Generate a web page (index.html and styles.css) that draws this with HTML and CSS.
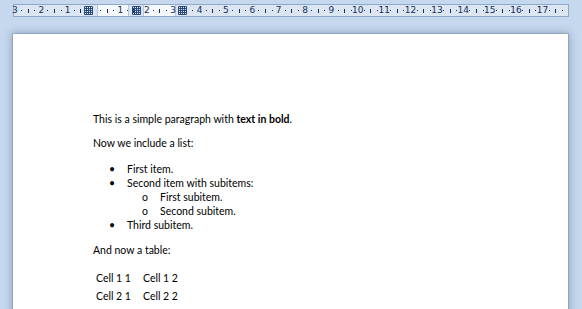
FILE: index.html
```html
<!DOCTYPE html>
<html>
<head>
<meta charset="utf-8">
<link rel="stylesheet" href="styles.css">
</head>
<body>
<div class="top">
  <div class="ruler">
    <div class="seg seg-margin"></div>
    <div class="seg seg-cell seg-c1"></div>
    <div class="seg seg-gap"></div>
    <div class="seg seg-cell seg-c2"></div>
    <div class="seg seg-rest"></div>
    <div class="scale"><i class="n">3</i><i class="d"></i><i class="b"></i><i class="d"></i><i class="n">2</i><i class="d"></i><i class="b"></i><i class="d"></i><i class="n">1</i><i class="d"></i><i class="b"></i><i class="d"></i><i class="n"></i><i class="d"></i><i class="b"></i><i class="d"></i><i class="n">1</i><i class="d"></i><i class="b"></i><i class="d"></i><i class="n">2</i><i class="d"></i><i class="b"></i><i class="d"></i><i class="n">3</i><i class="d"></i><i class="b"></i><i class="d"></i><i class="n">4</i><i class="d"></i><i class="b"></i><i class="d"></i><i class="n">5</i><i class="d"></i><i class="b"></i><i class="d"></i><i class="n">6</i><i class="d"></i><i class="b"></i><i class="d"></i><i class="n">7</i><i class="d"></i><i class="b"></i><i class="d"></i><i class="n">8</i><i class="d"></i><i class="b"></i><i class="d"></i><i class="n">9</i><i class="d"></i><i class="b"></i><i class="d"></i><i class="n">10</i><i class="d"></i><i class="b"></i><i class="d"></i><i class="n">11</i><i class="d"></i><i class="b"></i><i class="d"></i><i class="n">12</i><i class="d"></i><i class="b"></i><i class="d"></i><i class="n">13</i><i class="d"></i><i class="b"></i><i class="d"></i><i class="n">14</i><i class="d"></i><i class="b"></i><i class="d"></i><i class="n">15</i><i class="d"></i><i class="b"></i><i class="d"></i><i class="n">16</i><i class="d"></i><i class="b"></i><i class="d"></i><i class="n">17</i><i class="d"></i><i class="b"></i><i class="d"></i></div>
    <svg class="marker m1" width="9" height="9" viewBox="0 0 9 9"><path d="M0.5 0.5H8.5V8.5H0.5Z M2.5 0.5V8.5 M4.5 0.5V8.5 M6.5 0.5V8.5 M0.5 2.5H8.5 M0.5 4.5H8.5 M0.5 6.5H8.5" fill="none" stroke="#2a4a7a" stroke-width="1"/></svg>
    <svg class="marker m2" width="9" height="9" viewBox="0 0 9 9"><path d="M0.5 0.5H8.5V8.5H0.5Z M2.5 0.5V8.5 M4.5 0.5V8.5 M6.5 0.5V8.5 M0.5 2.5H8.5 M0.5 4.5H8.5 M0.5 6.5H8.5" fill="none" stroke="#2a4a7a" stroke-width="1"/></svg>
    <svg class="marker m3" width="9" height="9" viewBox="0 0 9 9"><path d="M0.5 0.5H8.5V8.5H0.5Z M2.5 0.5V8.5 M4.5 0.5V8.5 M6.5 0.5V8.5 M0.5 2.5H8.5 M0.5 4.5H8.5 M0.5 6.5H8.5" fill="none" stroke="#2a4a7a" stroke-width="1"/></svg>
  </div>
</div>
<div class="page">
  <p>This is a simple paragraph with <b>text in bold</b>.</p>
  <p>Now we include a list:</p>
  <ul class="list">
    <li>First item.</li>
    <li>Second item with subitems:
      <ul class="sublist">
        <li>First subitem.</li>
        <li>Second subitem.</li>
      </ul>
    </li>
    <li>Third subitem.</li>
  </ul>
  <p>And now a table:</p>
  <table class="tbl">
    <tr><td class="c1">Cell 1 1</td><td>Cell 1 2</td></tr>
    <tr><td class="c1">Cell 2 1</td><td>Cell 2 2</td></tr>
  </table>
</div>
</body>
</html>
```

FILE: styles.css
```css
html, body {
  margin: 0;
  padding: 0;
}
body {
  background: #c5d8ee;
  width: 582px;
  height: 309px;
  overflow: hidden;
  font-family: Lato, "Open Sans", sans-serif;
}
.top {
  height: 34px;
  padding: 4px 0 0 13px;
  box-sizing: border-box;
}
.ruler {
  position: relative;
  width: 556px;
  height: 13px;
  box-sizing: border-box;
  border: 1px solid #8ea8ca;
  background: #dce6f3;
  display: flex;
}
.seg { height: 100%; }
.seg-margin { width: 83px; }
.seg-cell {
  background: #f6f9fc;
  border-left: 1px solid #b7c8de;
  border-right: 1px solid #b7c8de;
  box-sizing: border-box;
}
.seg-c1 { width: 32px; }
.seg-gap { width: 14px; }
.seg-c2 { width: 33px; }
.seg-rest { flex: 1; }
.scale {
  position: absolute;
  left: -2.4px;
  top: 0;
  height: 11px;
  display: flex;
  align-items: center;
  font-family: "DejaVu Sans", sans-serif;
  font-size: 9px;
  color: #14305a;
}
.scale i {
  flex: 0 0 6.594px;
  min-width: 0;
  width: 6.594px;
  display: flex;
  justify-content: center;
  align-items: center;
  font-style: normal;
  height: 11px;
  line-height: 11px;
  white-space: nowrap;
}
.scale i.d::before {
  content: "";
  flex: none;
  width: 1px;
  height: 1px;
  background: #14305a;
}
.scale i.b::before {
  content: "";
  flex: none;
  width: 1px;
  height: 4px;
  background: #14305a;
}
.marker {
  position: absolute;
  top: 1px;
  display: block;
}
.m1 { left: 70px; }
.m2 { left: 118px; }
.m3 { left: 164px; }
.page {
  margin-left: 13px;
  width: 555px;
  height: 290px;
  background: #fff;
  box-shadow: 0 0 0 1px rgba(110, 125, 150, 0.35), 0 0 8px 1px rgba(70, 90, 120, 0.45);
  padding: 78px 0 0 80px;
  box-sizing: border-box;
  font-size: 10.5px;
  line-height: 14px;
  color: #000;
}
p { margin: 0 0 10px 0; }
b { font-weight: bold; }
.list {
  list-style: none;
  margin: 12px 0 11px 0;
  padding: 0 0 0 15px;
}
.list li::before {
  content: "•";
  display: inline-block;
  width: 8px;
  margin-right: 11px;
  text-align: center;
}
.sublist {
  list-style: none;
  margin: 0;
  padding: 0 0 0 33px;
}
.sublist li::before {
  content: "o";
  display: inline-block;
  width: 8px;
  margin-right: 11px;
  text-align: center;
}
.tbl {
  border-collapse: collapse;
  margin-top: 12px;
}
.tbl td {
  padding: 2px 3px;
  height: 14px;
  vertical-align: middle;
}
.tbl td.c1 { width: 41px; }
```
